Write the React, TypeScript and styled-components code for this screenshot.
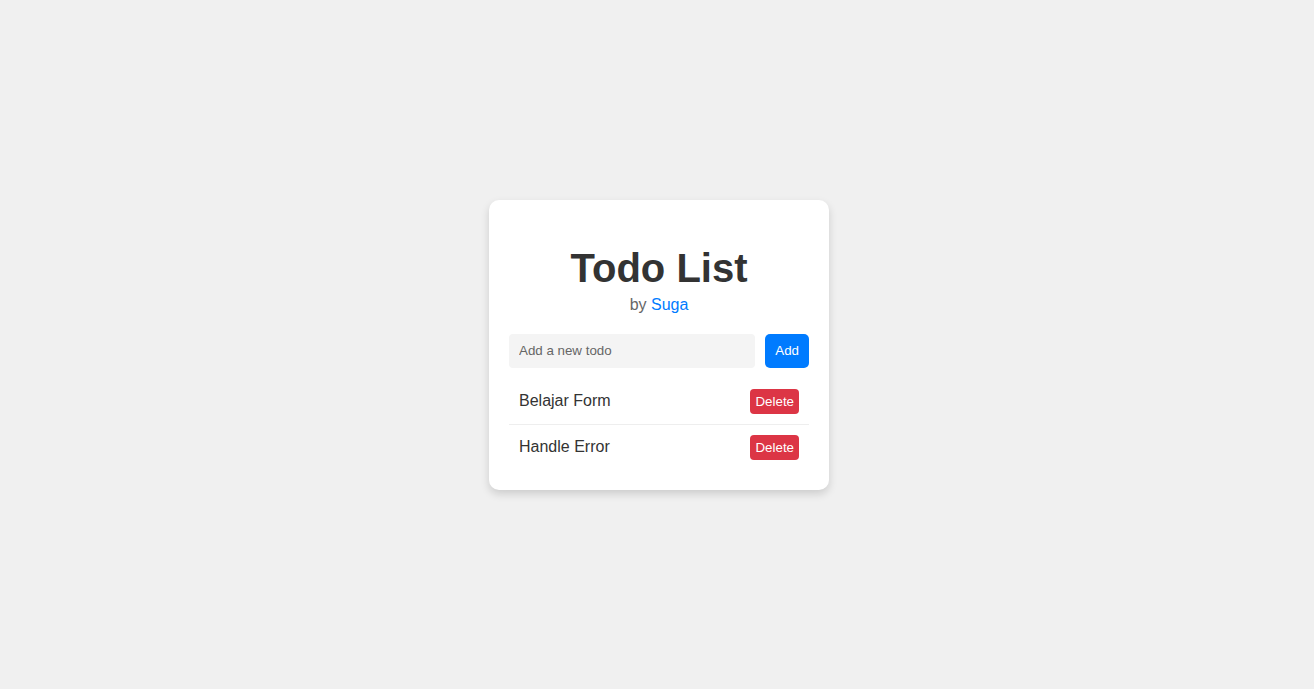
import React, { useState } from "react";
import styled, { createGlobalStyle } from "styled-components";

const Global = createGlobalStyle`
  html, body { margin: 0; padding: 0; }
  body {
    background: #f0f0f0;
    font-family: "Liberation Sans", Arial, sans-serif;
  }
  * { box-sizing: border-box; }
`;

const Page = styled.div`
  min-height: 100vh;
  display: flex;
  align-items: center;
  justify-content: center;
  padding-left: 4px;
`;

const Card = styled.div`
  width: 340px;
  background: #ffffff;
  border-radius: 10px;
  padding: 20px;
  box-shadow: 0 4px 8px rgba(0, 0, 0, 0.15);
`;

const Title = styled.h1`
  margin: 25px 0 0;
  font-size: 40px;
  line-height: 46px;
  font-weight: bold;
  color: #333333;
  text-align: center;
`;

const Subtitle = styled.p`
  margin: 5px 0 20px;
  font-size: 16px;
  line-height: 18px;
  color: #666666;
  text-align: center;
`;

const Author = styled.span`
  color: #007bff;
`;

const Form = styled.form`
  display: flex;
  gap: 10px;
  margin-bottom: 11px;
`;

const Input = styled.input`
  flex: 1;
  height: 34px;
  padding: 0 10px;
  border: none;
  border-radius: 4px;
  background: #f4f4f4;
  font-family: "Liberation Sans", Arial, sans-serif;
  font-size: 13.33px;
  color: #333;
  outline: none;
  &::placeholder { color: #666666; }
`;

const AddButton = styled.button`
  height: 34px;
  padding: 0 10px;
  border: none;
  border-radius: 5px;
  background: #007bff;
  color: #ffffff;
  font-family: "Liberation Sans", Arial, sans-serif;
  font-size: 13.33px;
  cursor: pointer;
`;

const List = styled.ul`
  list-style: none;
  margin: 0;
  padding: 0;
`;

const Item = styled.li`
  display: flex;
  align-items: center;
  justify-content: space-between;
  height: 46px;
  padding: 0 10px;
  border-bottom: 1px solid #eeeeee;
  font-size: 16px;
  color: #333333;
  &:last-child { border-bottom: none; height: 45px; }
`;

const DeleteButton = styled.button`
  height: 25px;
  padding: 0 5px;
  border: none;
  border-radius: 4px;
  background: #dc3545;
  color: #ffffff;
  font-family: "Liberation Sans", Arial, sans-serif;
  font-size: 13.33px;
  cursor: pointer;
`;

export default function App() {
  const [todos, setTodos] = useState<string[]>(["Belajar Form", "Handle Error"]);
  const [text, setText] = useState("");

  const add = (e: React.FormEvent) => {
    e.preventDefault();
    if (!text.trim()) return;
    setTodos([...todos, text.trim()]);
    setText("");
  };

  return (
    <>
      <Global />
      <Page>
        <Card>
          <Title>Todo List</Title>
          <Subtitle>
            by <Author>Suga</Author>
          </Subtitle>
          <Form onSubmit={add}>
            <Input
              placeholder="Add a new todo"
              value={text}
              onChange={(e) => setText(e.target.value)}
            />
            <AddButton type="submit">Add</AddButton>
          </Form>
          <List>
            {todos.map((t, i) => (
              <Item key={i}>
                <span>{t}</span>
                <DeleteButton onClick={() => setTodos(todos.filter((_, j) => j !== i))}>
                  Delete
                </DeleteButton>
              </Item>
            ))}
          </List>
        </Card>
      </Page>
    </>
  );
}
